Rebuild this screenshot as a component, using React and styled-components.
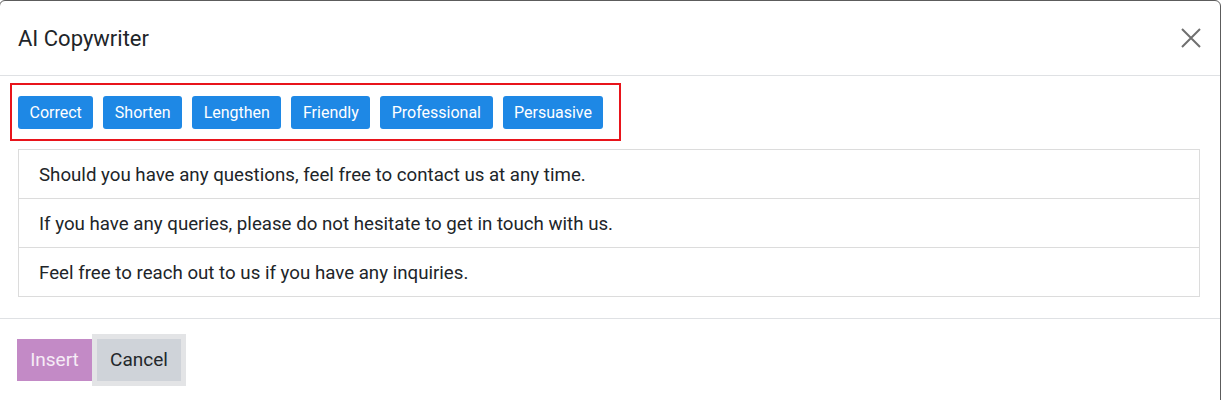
import styled, { createGlobalStyle } from 'styled-components'

const GlobalStyle = createGlobalStyle`
  html, body {
    margin: 0;
    padding: 0;
    background: #ffffff;
  }
  body {
    font-family: Roboto, "Liberation Sans", sans-serif;
    color: #212529;
    overflow: hidden;
  }
`

const actions = ['Correct', 'Shorten', 'Lengthen', 'Friendly', 'Professional', 'Persuasive']

const suggestions = [
  'Should you have any questions, feel free to contact us at any time.',
  'If you have any queries, please do not hesitate to get in touch with us.',
  'Feel free to reach out to us if you have any inquiries.',
]

export default function App() {
  return (
    <>
      <GlobalStyle />
      <Modal>
        <Header>
          <Title>AI Copywriter</Title>
          <CloseButton aria-label="Close">
            <svg width="20" height="20" viewBox="0 0 20 20">
              <path
                d="M1 1 L19 19 M19 1 L1 19"
                stroke="#6f6f6f"
                strokeWidth="2"
                fill="none"
              />
            </svg>
          </CloseButton>
        </Header>
        <Body>
          <ActionBar>
            {actions.map((a) => (
              <ActionButton key={a}>{a}</ActionButton>
            ))}
          </ActionBar>
          <SuggestionList>
            {suggestions.map((s) => (
              <Suggestion key={s}>{s}</Suggestion>
            ))}
          </SuggestionList>
        </Body>
        <Footer>
          <InsertButton disabled>Insert</InsertButton>
          <CancelButton>Cancel</CancelButton>
        </Footer>
      </Modal>
    </>
  )
}

const Modal = styled.div`
  width: 1222px;
  height: 420px;
  margin-left: -1px;
  box-sizing: border-box;
  border: 1px solid #5c5c5c;
  border-radius: 6px;
  background: #fff;
`

const Header = styled.header`
  display: flex;
  align-items: center;
  justify-content: space-between;
  height: 74px;
  padding: 0 19px 0 18px;
  border-bottom: 1px solid #dfe1e4;
`

const Title = styled.h1`
  margin: 0;
  font-size: 22px;
  font-weight: 400;
  color: #212529;
`

const CloseButton = styled.button`
  all: unset;
  display: flex;
  width: 20px;
  height: 20px;
  cursor: pointer;
`

const Body = styled.div`
  padding: 7px 20px 21px 18px;
  border-bottom: 1px solid #dfe1e4;
`

const ActionBar = styled.div`
  display: inline-flex;
  gap: 10px;
  margin-left: -8px;
  padding: 11px 16px 10px 6px;
  border: 2px solid #e8141b;
`

const ActionButton = styled.button`
  all: unset;
  cursor: pointer;
  height: 33px;
  padding: 0 11.5px;
  border-radius: 3px;
  background: #1e88e5;
  color: #fff;
  font-family: Roboto, "Liberation Sans", sans-serif;
  font-size: 16px;
  line-height: 33px;
`

const SuggestionList = styled.div`
  margin-top: 8px;
  border: 1px solid #dcdcdc;
`

const Suggestion = styled.div`
  height: 48px;
  box-sizing: border-box;
  display: flex;
  align-items: center;
  padding: 2px 20px 0;
  font-size: 18.7px;
  color: #212529;
  & + & {
    height: 49px;
    border-top: 1px solid #dcdcdc;
  }
`

const Footer = styled.footer`
  display: flex;
  align-items: center;
  padding: 20px 17px;
`

const BaseButton = styled.button`
  all: unset;
  height: 42px;
  line-height: 42px;
  font-family: Roboto, "Liberation Sans", sans-serif;
  font-size: 19px;
  text-align: center;
  box-sizing: border-box;
`

const InsertButton = styled(BaseButton)`
  width: 75px;
  background: #c38ac6;
  color: #f6ecf6;
  cursor: default;
`

const CancelButton = styled(BaseButton)`
  width: 84px;
  margin-left: 5px;
  background: #cfd3d9;
  color: #23272b;
  cursor: pointer;
  box-shadow: 0 0 0 5px #e3e4e6;
`
